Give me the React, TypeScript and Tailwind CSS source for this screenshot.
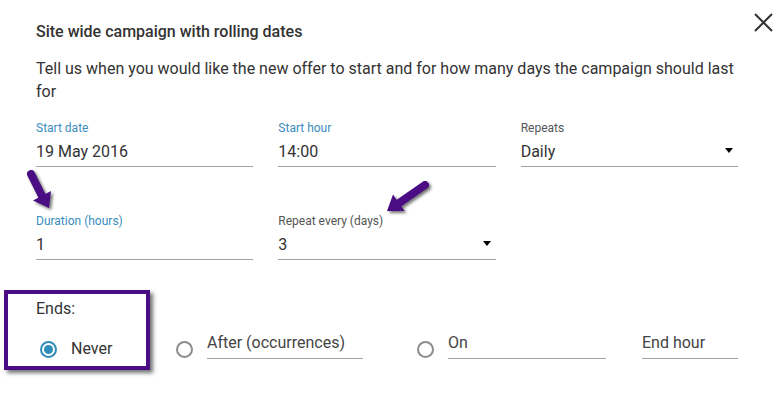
import React from 'react';

interface FieldProps {
  label: string;
  value: string;
  active?: boolean;
  select?: boolean;
}

function Field({ label, value, active, select }: FieldProps) {
  return (
    <div className="flex flex-col">
      <label className={`text-[12px] leading-4 ${active ? 'text-[#3a8dbd]' : 'text-[#555]'}`}>{label}</label>
      <div className="mt-1 pb-[2px] border-b border-[#a3a3a3] flex items-center justify-between">
        <span className="text-[16px] leading-6 text-[#333]">{value}</span>
        {select && (
          <span className="mr-[5px] -mt-[3px] w-0 h-0 border-l-[4px] border-r-[4px] border-t-[5px] border-l-transparent border-r-transparent border-t-black" />
        )}
      </div>
    </div>
  );
}

function Radio({ checked }: { checked?: boolean }) {
  return (
    <span
      className={`shrink-0 w-[17px] h-[17px] rounded-full border-2 flex items-center justify-center ${
        checked ? 'border-[#2f8dba]' : 'border-[#8c8c8c]'
      }`}
    >
      {checked && <span className="w-[9px] h-[9px] rounded-full bg-[#2f8dba]" />}
    </span>
  );
}

function LineInput({ placeholder, width }: { placeholder: string; width: string }) {
  return (
    <div className={`${width} pb-[5px] border-b border-[#a3a3a3] text-[16px] leading-5 text-[#444]`}>{placeholder}</div>
  );
}

export default function App() {
  return (
    <div className="relative w-[780px] h-[395px] bg-white overflow-hidden text-[#333] font-['Roboto','Liberation_Sans',sans-serif]">
      {/* close */}
      <button className="absolute left-[754px] top-[13px] w-[19px] h-[19px]">
        <svg viewBox="0 0 19 19" className="w-[19px] h-[19px]">
          <path d="M1 1 L18 18 M18 1 L1 18" stroke="#333" strokeWidth="2" />
        </svg>
      </button>

      <div className="pl-9 pr-[42px] pt-[22px]">
        <h2 className="text-[16px] font-medium leading-5 text-[#333]">Site wide campaign with rolling dates</h2>
        <p className="mt-[15px] text-[16px] leading-[23px] text-[#333]">
          Tell us when you would like the new offer to start and for how many days the campaign should last for
        </p>

        <div className="mt-[17px] grid grid-cols-3 gap-x-[25px] gap-y-[46px]">
          <Field label="Start date" value="19 May 2016" active />
          <Field label="Start hour" value="14:00" active />
          <Field label="Repeats" value="Daily" select />
          <Field label="Duration (hours)" value="1" active />
          <Field label="Repeat every (days)" value="3" select />
        </div>

        {/* Ends */}
        <div className="mt-[39px] text-[16px] leading-5 text-[#333]">Ends:</div>
        <div className="mt-[14px] flex items-start">
          <div className="w-[137px] ml-1 flex items-start">
            <span className="mt-2"><Radio checked /></span>
            <span className="ml-[14px] mt-[6px] text-[16px] leading-5 text-[#333]">Never</span>
          </div>
          <span className="mt-2"><Radio /></span>
          <div className="ml-[14px]"><LineInput placeholder="After (occurrences)" width="w-[156px]" /></div>
          <span className="ml-[54px] mt-2"><Radio /></span>
          <div className="ml-[14px]"><LineInput placeholder="On" width="w-[158px]" /></div>
          <div className="ml-[36px]"><LineInput placeholder="End hour" width="w-[96px]" /></div>
        </div>
      </div>

      {/* annotation box */}
      <div className="absolute left-[4px] top-[290px] w-[146px] h-[80px] border-4 border-[#4a0d83] shadow-[3px_3px_4px_rgba(0,0,0,0.55)]" />

      {/* annotation arrows */}
      <svg className="absolute left-[20px] top-[165px] drop-shadow-[2px_2px_1.5px_rgba(0,0,0,0.55)]" width="45" height="50" viewBox="0 0 45 50">
        <line x1="11" y1="9" x2="22" y2="31" stroke="#4a0d83" strokeWidth="8" strokeLinecap="round" />
        <polygon points="31,26 29,43 13,35.5" fill="#4a0d83" />
      </svg>
      <svg className="absolute left-[375px] top-[170px] drop-shadow-[2px_2px_1.5px_rgba(0,0,0,0.55)]" width="60" height="50" viewBox="0 0 60 50">
        <line x1="50" y1="15" x2="24" y2="33" stroke="#4a0d83" strokeWidth="8" strokeLinecap="round" />
        <polygon points="18,24.5 12,41 29.5,41" fill="#4a0d83" />
      </svg>
    </div>
  );
}
